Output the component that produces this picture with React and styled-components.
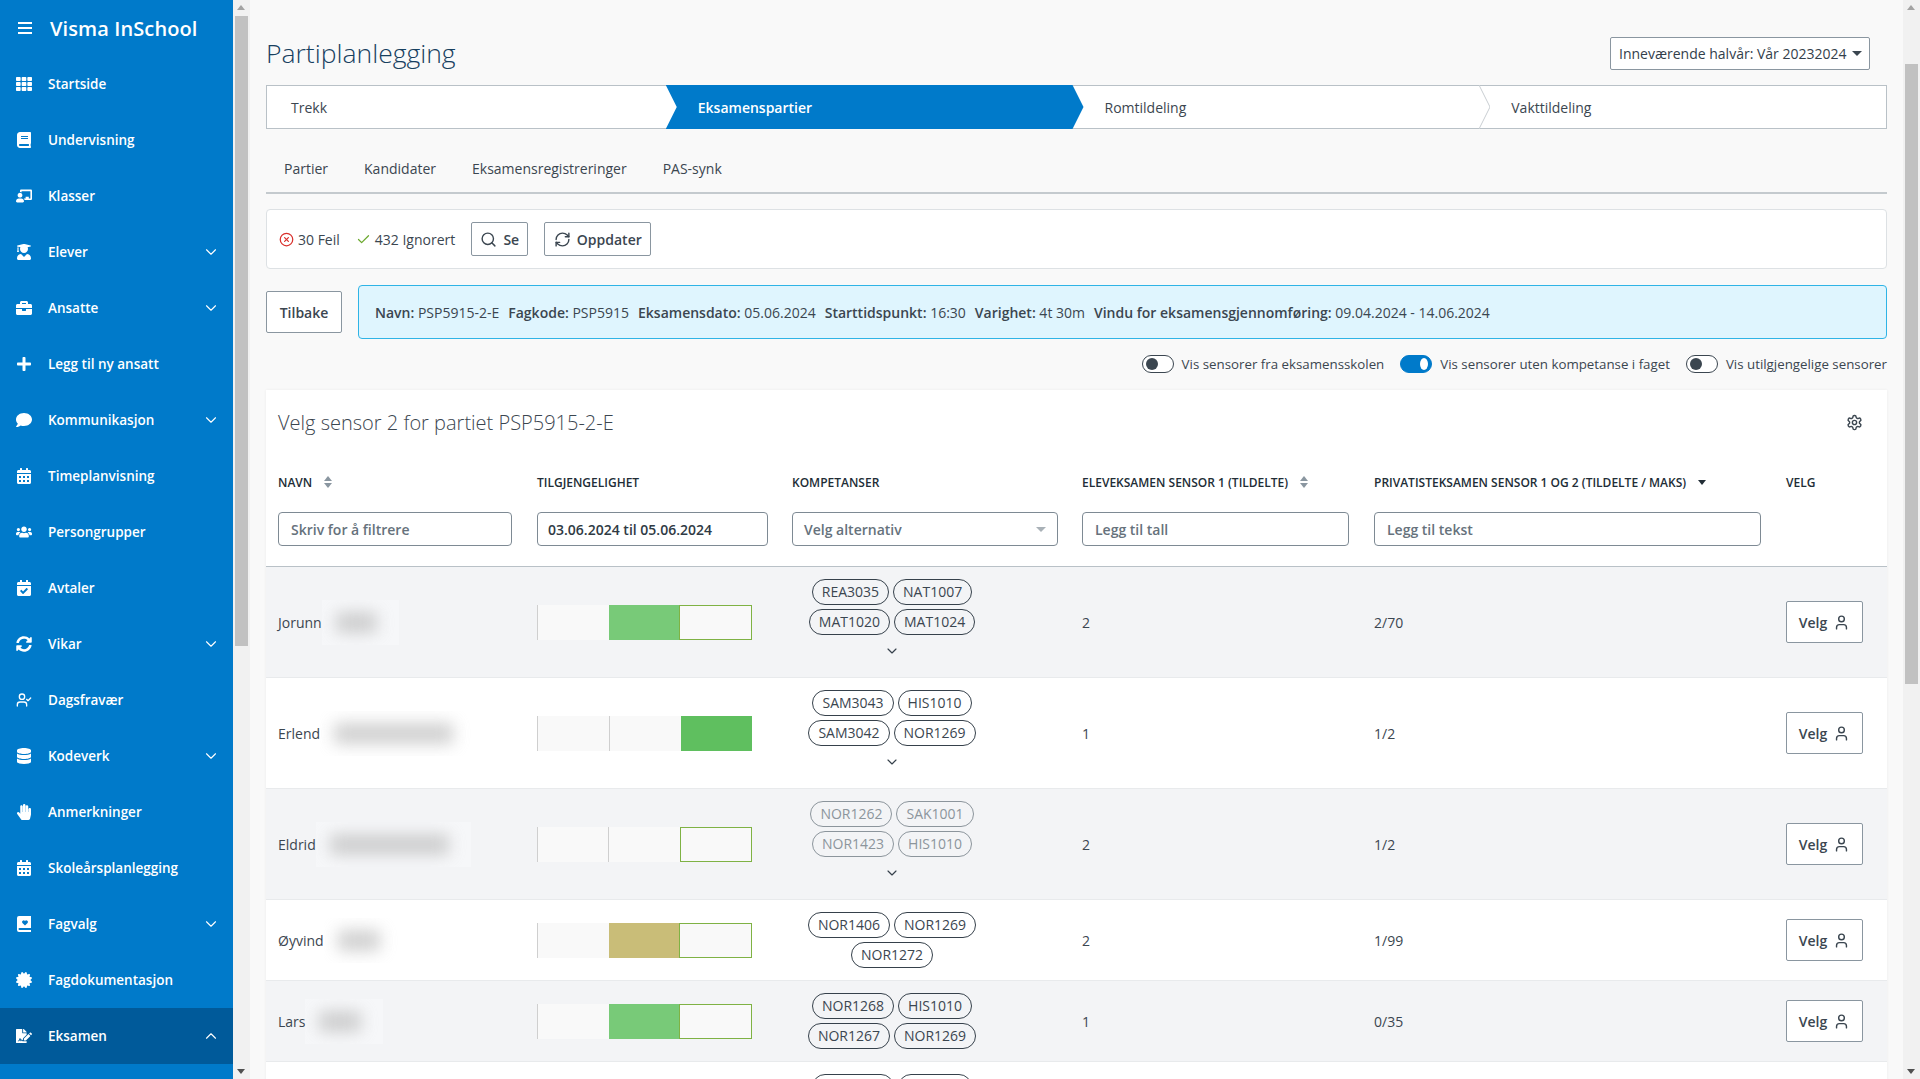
import React from 'react';
import styled, { createGlobalStyle } from 'styled-components';
import {
  FaTh, FaBook, FaChalkboardTeacher, FaUserGraduate, FaBriefcase, FaPlus, FaComment,
  FaCalendarAlt, FaUsers, FaCalendarCheck, FaSyncAlt, FaDatabase, FaHandPaper,
  FaCertificate, FaFileSignature,
} from 'react-icons/fa';
import {
  LuChevronDown, LuChevronUp, LuUserCheck, LuSearch, LuRefreshCw, LuUser, LuCircleX, LuCheck, LuSettings,
} from 'react-icons/lu';

const GlobalStyle = createGlobalStyle`
  html, body { margin: 0; padding: 0; height: 100%; overflow: hidden; }
  body { font-family: "Open Sans", "Liberation Sans", sans-serif; font-size: 14px; color: #3b4650; background: #f9f9f9; }
  * { box-sizing: border-box; }
`;

const Page = styled.div`
  display: flex; height: 100vh; overflow: hidden;
`;

/* sidebar */
const Side = styled.aside`
  display: flex; width: 250px; flex: none;
`;
const Nav = styled.nav`
  width: 233px; background: #007aca; color: #fff; overflow: hidden;
`;
const Brand = styled.div`
  height: 56px; display: flex; align-items: center; font-size: 20px; font-weight: 600; letter-spacing: .1px;
  svg { width: 14px; height: 12px; margin: 0 18px 0 18px; }
`;
const NavItem = styled.div`
  height: 56px; display: flex; align-items: center; padding-right: 13px; font-size: 13.5px; font-weight: 600;
  background: ${p => (p.$active ? '#005a9a' : 'transparent')};
`;
const NavIcon = styled.span`
  width: 48px; flex: none; display: flex; justify-content: center; padding-right: -2px;
  svg { width: 16px; height: 16px; }
`;
const NavLabel = styled.span`
  flex: 1; white-space: nowrap;
`;

const Scrollbar = styled.div`
  width: 17px; flex: none; background: #f1f1f1; display: flex; flex-direction: column; align-items: center; position: relative;
`;
const ScrollThumb = styled.div`
  width: 13px; background: #c1c1c1; margin-top: ${p => p.$top}px; height: ${p => p.$height}px;
`;
const ScrollArrow = styled.span`
  position: absolute; left: 4px; width: 0; height: 0; border-left: 4.5px solid transparent; border-right: 4.5px solid transparent;
  ${p => (p.$down ? 'bottom: 5px; border-top: 5px solid #505050;' : 'top: 5px; border-bottom: 5px solid #a3a3a3;')}
`;

/* main */
const Main = styled.main`
  flex: 1; display: flex; min-width: 0;
`;
const Content = styled.div`
  flex: 1; min-width: 0; padding: 0 16px; overflow: hidden;
`;
const PageHead = styled.header`
  height: 85px; padding: 37px 17px 15px 0; display: flex; align-items: center; justify-content: space-between;
`;
const Title = styled.h1`
  margin: 0; font-size: 26.5px; font-weight: 300; color: #17405f; line-height: 33px;
`;
const TermSelect = styled.div`
  width: 260px; height: 33px; background: #fff; border: 1px solid #8a96a0; border-radius: 2px; display: flex; align-items: center;
  justify-content: space-between; padding: 0 7px 0 8px; font-size: 14px; color: #33404b; white-space: nowrap;
`;
const Caret = styled.span`
  flex: none; width: 0; height: 0; border-left: 5px solid transparent; border-right: 5px solid transparent;
  border-top: 5px solid ${p => p.$color || '#3b4650'};
`;

const Stepper = styled.div`
  display: flex; height: 44px; background: #fff; border: 1px solid #b9c1c7;
`;
const Step = styled.div`
  flex: 1; position: relative; display: flex; align-items: center; padding-left: ${p => (p.$first ? '24px' : '32px')};
  color: ${p => (p.$active ? '#fff' : '#3b4650')}; font-weight: ${p => (p.$active ? 600 : 400)};
  ${p => p.$active && `
    &::before {
      content: ""; position: absolute; top: -1px; bottom: -1px; left: 0; right: -11px; background: #007aca;
      clip-path: polygon(0 0, calc(100% - 11px) 0, 100% 50%, calc(100% - 11px) 100%, 0 100%, 11px 50%);
    }
  `}
  span { position: relative; }
`;
const StepDivider = styled.svg`
  position: absolute; right: -11px; top: -1px; width: 11px; height: 44px;
`;

const Tabs = styled.div`
  display: flex; padding-top: 30px; border-bottom: 2px solid #c4cace; height: 65px;
`;
const Tab = styled.div`
  padding: 0 18px; line-height: 20px;
`;

const Toolbar = styled.div`
  margin-top: 15px; height: 60px; background: #fff; border: 1px solid #dde1e4; border-radius: 4px; display: flex; align-items: center; padding: 0 12px;
`;
const Stat = styled.span`
  display: inline-flex; align-items: center; gap: 4px; margin-right: 16px;
  svg { width: 15px; height: 15px; color: ${p => p.$color}; }
`;
const Button = styled.button`
  height: ${p => p.$h || 34}px; width: ${p => p.$w}px; flex: none; background: #fff; border: 1px solid #8a96a0; border-radius: 2px; display: inline-flex; align-items: center; justify-content: center; gap: 6px;
  font: 600 14px "Open Sans", "Liberation Sans", sans-serif; color: #3b4650; padding: 0; margin-right: ${p => p.$mr || 0}px;
  svg { width: 17px; height: 17px; }
`;

const BackRow = styled.div`
  margin-top: 16px; display: flex; align-items: center; gap: 16px;
`;
const Info = styled.div`
  flex: 1; height: 54px; background: #dff5fe; border: 1px solid #2fb4e6; border-radius: 4px; display: flex; align-items: center; gap: 9px; padding: 0 16px;
  white-space: nowrap;
  b { font-weight: 600; }
`;

const ToggleRow = styled.div`
  margin-top: 16px; height: 18px; display: flex; justify-content: flex-end; align-items: center; gap: 16px; font-size: 13.3px;
`;
const ToggleItem = styled.label`
  display: flex; align-items: center; gap: 8px;
`;
const Toggle = styled.span`
  width: 32px; height: 18px; border-radius: 9px; display: flex; align-items: center; padding: 0 3px;
  justify-content: ${p => (p.$on ? 'flex-end' : 'flex-start')};
  background: ${p => (p.$on ? '#007aca' : '#fff')}; border: 1px solid ${p => (p.$on ? '#007aca' : '#3b4650')};
  &::after { content: ""; width: ${p => (p.$on ? 8 : 12)}px; height: 12px; border-radius: 50%; background: ${p => (p.$on ? '#fff' : '#3b4650')}; }
`;

const Card = styled.section`
  margin-top: 17px; background: #fff; box-shadow: 0 0 3px rgba(0,0,0,.06);
`;
const CardHead = styled.div`
  height: 64px; display: flex; align-items: center; justify-content: space-between; padding: 0 24px 0 12px;
  svg { width: 17px; height: 17px; }
`;
const CardTitle = styled.h2`
  margin: 0; font-size: 20px; font-weight: 300; color: #3b4650;
`;

const cols = '271px 255px 290px 292px 412px 1fr';
const HeadGrid = styled.div`
  display: grid; grid-template-columns: ${cols}; border-bottom: 1px solid #b9c1c7; height: 113px;
`;
const HeadCell = styled.div`
  padding-top: 19px; padding-left: ${p => (p.$first ? '12px' : 0)};
`;
const HeadLabel = styled.div`
  height: 18px; display: flex; align-items: center; gap: 12px; font-size: 12px; font-weight: 600; color: #222d36; white-space: nowrap;
`;
const SortIcon = styled.svg`
  width: 8px; height: 12px; flex: none;
`;
const FieldBox = styled.div`
  margin-top: 21px; height: 34px; width: ${p => p.$w}px; margin-left: ${p => p.$ml || 0}px; background: #fff; border: 1px solid #7e8a94; border-radius: 4px; padding: 0 ${p => p.$pad || 12}px;
  display: flex; align-items: center; justify-content: space-between; color: ${p => (p.$value ? '#2f3a44' : '#66727c')}; font-weight: 600; font-size: 14px; white-space: nowrap;
`;

const Row = styled.div`
  display: grid; grid-template-columns: ${cols}; align-items: center; padding: 12px 0; border-bottom: 1px solid #e8eaec;
  background: ${p => (p.$alt ? '#f3f4f6' : '#fff')};
`;
const NameCell = styled.div`
  display: flex; align-items: center; padding-left: 12px; height: 45px;
`;
const Blurred = styled.span`
  position: relative; display: block; height: 45px; width: ${p => p.$w}px; background: rgba(255,255,255,.3); overflow: hidden;
  &::after { content: ""; position: absolute; inset: 12px 22px 12px 14px; background: #bdbdbd; filter: blur(8px); opacity: .7; }
`;
const Slots = styled.div`
  display: flex; width: 215px; height: 35px;
`;
const Slot = styled.div`
  flex: 1;
  ${p => {
    if (p.$tone === 'picked') return 'background: #f9f9f9; border: 1.5px solid #7fb244;';
    if (p.$tone === 'green') return 'background: #78ca78;';
    if (p.$tone === 'strong') return 'background: #5fbf5f;';
    if (p.$tone === 'gold') return 'background: #c9bd78;';
    return 'background: #f9f9f9; border-left: 1px solid #cfcfcf;';
  }}
`;
const ChipCell = styled.div`
  width: 200px;
`;
const Chips = styled.div`
  display: flex; flex-wrap: wrap; justify-content: center; gap: 4px;
`;
const Chip = styled.span`
  height: 26px; line-height: 24px; padding: 0 9px; border-radius: 13px; border: 1px solid ${p => (p.$muted ? '#8c959c' : '#36414b')};
  color: ${p => (p.$muted ? '#8c959c' : '#3b4650')}; font-size: 14px; white-space: nowrap;
`;
const More = styled.div`
  height: 30px; padding-top: 8px; display: flex; justify-content: center;
  svg { width: 16px; height: 16px; color: #36414b; }
`;

const sideItems = [
  ['Startside', <FaTh />],
  ['Undervisning', <FaBook />],
  ['Klasser', <FaChalkboardTeacher />, false],
  ['Elever', <FaUserGraduate />, true],
  ['Ansatte', <FaBriefcase />, true],
  ['Legg til ny ansatt', <FaPlus />],
  ['Kommunikasjon', <FaComment />, true],
  ['Timeplanvisning', <FaCalendarAlt />],
  ['Persongrupper', <FaUsers />],
  ['Avtaler', <FaCalendarCheck />],
  ['Vikar', <FaSyncAlt />, true],
  ['Dagsfravær', <LuUserCheck />],
  ['Kodeverk', <FaDatabase />, true],
  ['Anmerkninger', <FaHandPaper />],
  ['Skoleårsplanlegging', <FaCalendarAlt />],
  ['Fagvalg', <BookHeart />, true],
  ['Fagdokumentasjon', <FaCertificate />],
];

const people = [
  { name: 'Jorunn', blur: 77, slots: ['', 'green', 'picked'], chips: ['REA3035', 'NAT1007', 'MAT1020', 'MAT1024'], more: true, elev: 2, priv: '2/70' },
  { name: 'Erlend', blur: 155, slots: ['', '', 'strong'], chips: ['SAM3043', 'HIS1010', 'SAM3042', 'NOR1269'], more: true, elev: 1, priv: '1/2' },
  { name: 'Eldrid', blur: 155, slots: ['', '', 'picked'], chips: ['NOR1262', 'SAK1001', 'NOR1423', 'HIS1010'], more: true, muted: true, elev: 2, priv: '1/2' },
  { name: 'Øyvind', blur: 78, slots: ['', 'gold', 'picked'], chips: ['NOR1406', 'NOR1269', 'NOR1272'], elev: 2, priv: '1/99' },
  { name: 'Lars', blur: 78, slots: ['', 'green', 'picked'], chips: ['NOR1268', 'HIS1010', 'NOR1267', 'NOR1269'], elev: 1, priv: '0/35' },
  { name: 'Siv', blur: 78, slots: ['', 'green', 'picked'], chips: ['NOR1268', 'HIS1010', 'NOR1267', 'NOR1269'], elev: 1, priv: '0/35' },
];

function BookHeart() {
  return (
    <svg viewBox="0 0 14 16">
      <path fill="currentColor" fillRule="evenodd" d="M2 0h12v12H2.5a1 1 0 0 0 0 2H14v2H2a2 2 0 0 1-2-2V2a2 2 0 0 1 2-2z M8 9.6 5.4 7a1.6 1.6 0 0 1 2.6-2 1.6 1.6 0 0 1 2.6 2z" />
    </svg>
  );
}

function Sort({ only }) {
  return (
    <SortIcon viewBox="0 0 8 12">
      {!only && <path d="M4 0l4 5H0z" fill="#8a96a0" />}
      <path d={only ? 'M0 4h8l-4 5z' : 'M0 7h8l-4 5z'} fill={only ? '#222d36' : '#8a96a0'} />
    </SortIcon>
  );
}

export default function App() {
  return (
    <Page>
      <GlobalStyle />
      <Side>
        <Nav>
          <Brand>
            <svg viewBox="0 0 14 12"><path d="M0 1h14M0 6h14M0 11h14" stroke="#fff" strokeWidth="1.8" /></svg>
            Visma InSchool
          </Brand>
          {sideItems.map(([label, icon, open]) => (
            <NavItem key={label}>
              <NavIcon>{icon}</NavIcon>
              <NavLabel>{label}</NavLabel>
              {open && <LuChevronDown size={18} strokeWidth={1.5} />}
            </NavItem>
          ))}
          <NavItem $active>
            <NavIcon><FaFileSignature /></NavIcon>
            <NavLabel>Eksamen</NavLabel>
            <LuChevronUp size={18} strokeWidth={1.5} />
          </NavItem>
        </Nav>
        <Scrollbar>
          <ScrollArrow />
          <ScrollThumb $top={16} $height={630} />
          <ScrollArrow $down />
        </Scrollbar>
      </Side>
      <Main>
        <Content>
          <PageHead>
            <Title>Partiplanlegging</Title>
            <TermSelect>Inneværende halvår: Vår 20232024<Caret /></TermSelect>
          </PageHead>
          <Stepper>
            <Step $first><span>Trekk</span></Step>
            <Step $active><span>Eksamenspartier</span></Step>
            <Step>
              <span>Romtildeling</span>
              <StepDivider viewBox="0 0 11 44"><path d="M0 0l11 22L0 44" fill="#fff" stroke="#c9ced2" /></StepDivider>
            </Step>
            <Step><span>Vakttildeling</span></Step>
          </Stepper>
          <Tabs>
            <Tab>Partier</Tab>
            <Tab>Kandidater</Tab>
            <Tab>Eksamensregistreringer</Tab>
            <Tab>PAS-synk</Tab>
          </Tabs>
          <Toolbar>
            <Stat $color="#d9302c"><LuCircleX />30 Feil</Stat>
            <Stat $color="#6ca92f"><LuCheck />432 Ignorert</Stat>
            <Button $w={57} $mr={16}><LuSearch />Se</Button>
            <Button $w={107}><LuRefreshCw />Oppdater</Button>
          </Toolbar>
          <BackRow>
            <Button $w={76} $h={42}>Tilbake</Button>
            <Info>
              <span><b>Navn:</b> PSP5915-2-E</span>
              <span><b>Fagkode:</b> PSP5915</span>
              <span><b>Eksamensdato:</b> 05.06.2024</span>
              <span><b>Starttidspunkt:</b> 16:30</span>
              <span><b>Varighet:</b> 4t 30m</span>
              <span><b>Vindu for eksamensgjennomføring:</b> 09.04.2024 - 14.06.2024</span>
            </Info>
          </BackRow>
          <ToggleRow>
            <ToggleItem><Toggle />Vis sensorer fra eksamensskolen</ToggleItem>
            <ToggleItem><Toggle $on />Vis sensorer uten kompetanse i faget</ToggleItem>
            <ToggleItem><Toggle />Vis utilgjengelige sensorer</ToggleItem>
          </ToggleRow>
          <Card>
            <CardHead>
              <CardTitle>Velg sensor 2 for partiet PSP5915-2-E</CardTitle>
              <LuSettings />
            </CardHead>
            <HeadGrid>
              <HeadCell $first>
                <HeadLabel>NAVN <Sort /></HeadLabel>
                <FieldBox $w={234}>Skriv for å filtrere</FieldBox>
              </HeadCell>
              <HeadCell>
                <HeadLabel>TILGJENGELIGHET</HeadLabel>
                <FieldBox $w={231} $value $pad={10}>03.06.2024 til 05.06.2024</FieldBox>
              </HeadCell>
              <HeadCell>
                <HeadLabel>KOMPETANSER</HeadLabel>
                <FieldBox $w={266} $pad={11}>Velg alternativ<Caret $color="#a9b1b7" /></FieldBox>
              </HeadCell>
              <HeadCell>
                <HeadLabel>ELEVEKSAMEN SENSOR 1 (TILDELTE) <Sort /></HeadLabel>
                <FieldBox $w={267}>Legg til tall</FieldBox>
              </HeadCell>
              <HeadCell>
                <HeadLabel>PRIVATISTEKSAMEN SENSOR 1 OG 2 (TILDELTE / MAKS) <Sort only /></HeadLabel>
                <FieldBox $w={387}>Legg til tekst</FieldBox>
              </HeadCell>
              <HeadCell>
                <HeadLabel>VELG</HeadLabel>
              </HeadCell>
            </HeadGrid>
            {people.map((p, i) => (
              <Row key={p.name} $alt={i % 2 === 0}>
                <NameCell>{p.name}<Blurred $w={p.blur} /></NameCell>
                <Slots>
                  {p.slots.map((s, j) => <Slot key={j} $tone={s} />)}
                </Slots>
                <ChipCell>
                  <Chips>
                    {p.chips.map(c => <Chip key={c} $muted={p.muted}>{c}</Chip>)}
                  </Chips>
                  {p.more && <More><LuChevronDown strokeWidth={1.75} /></More>}
                </ChipCell>
                <div>{p.elev}</div>
                <div>{p.priv}</div>
                <Button $w={77} $h={42}>Velg <LuUser /></Button>
              </Row>
            ))}
          </Card>
        </Content>
        <Scrollbar>
          <ScrollArrow />
          <ScrollThumb $top={64} $height={620} />
          <ScrollArrow $down />
        </Scrollbar>
      </Main>
    </Page>
  );
}
